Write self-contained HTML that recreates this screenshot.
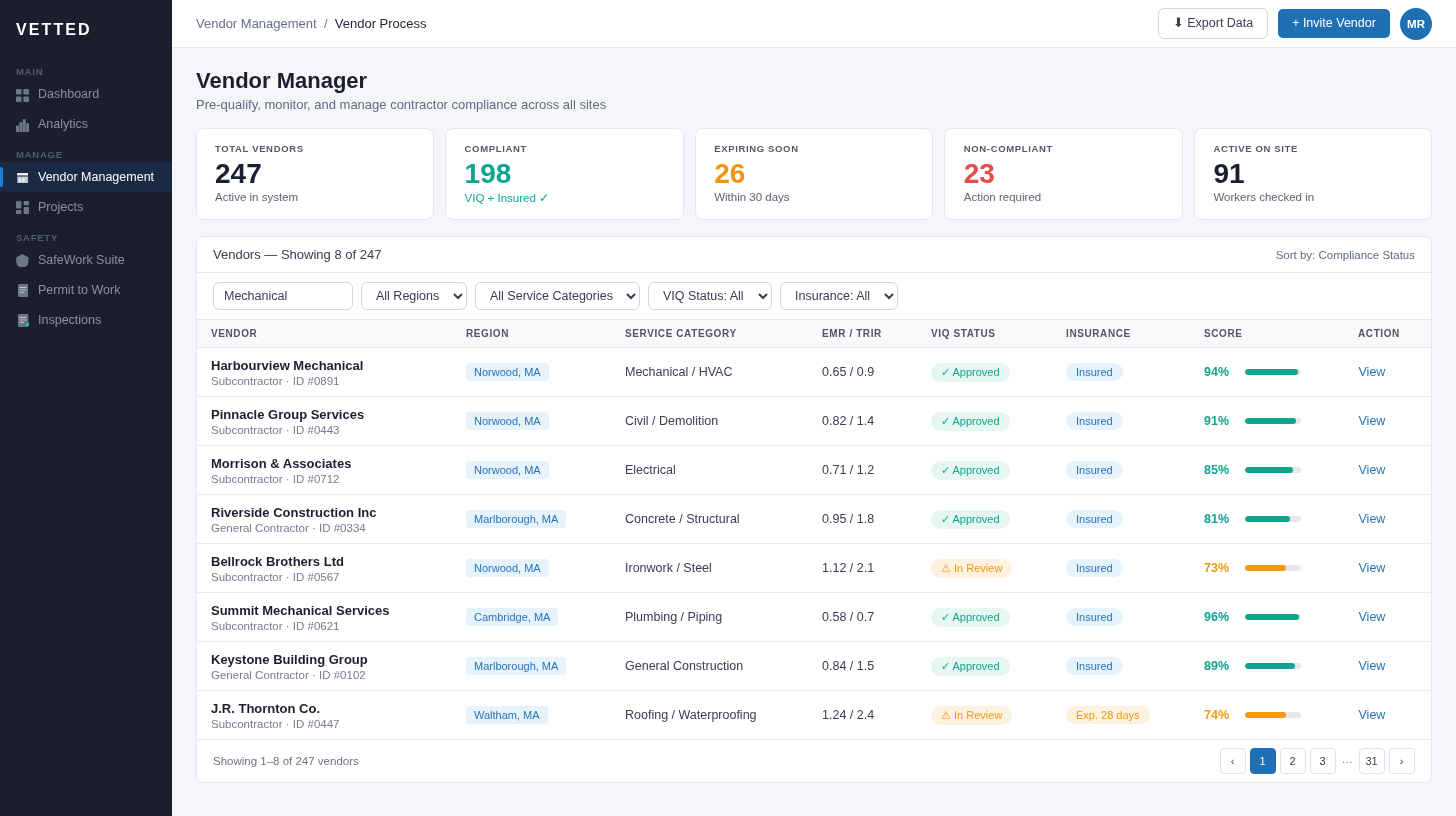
<!DOCTYPE html>
<html><head><meta charset="utf-8">
<style>
*{box-sizing:border-box;margin:0;padding:0}
html,body{width:1456px;height:816px;overflow:hidden}
body>div,body>h1{will-change:transform}
body{font-family:"Liberation Sans",sans-serif;background:#f4f6fa;color:#1e2433;position:relative}
.sb{position:absolute;left:0;top:0;width:172px;height:816px;background:#1b1e2d}
.logo{position:absolute;left:16px;top:21px;font-size:16px;font-weight:bold;color:#fff;letter-spacing:2.1px}
.sec{position:absolute;left:16px;font-size:9.5px;font-weight:bold;color:#535d70;letter-spacing:0.75px;margin-top:-1px}
.it{position:absolute;left:0;width:172px;height:30px;font-size:12.5px;color:#8a91a0}
.it .ic{position:absolute;left:16px;top:10px;width:13px;height:13px}
.it .tx{position:absolute;left:38px;top:8.4px;white-space:nowrap}
.it.act{background:#1b2a44;color:#fff}
.it.act:before{content:"";position:absolute;left:0;top:5px;width:3px;height:20px;background:#1f7fd6;border-radius:0 2px 2px 0}
.top{position:absolute;left:172px;top:0;width:1284px;height:48px;background:#fff;border-bottom:1px solid #e3e7ee}
.bc{position:absolute;left:24px;top:16px;font-size:13px;color:#667085;white-space:nowrap}
.bc b{font-weight:normal;color:#1e2433}
.btn1{position:absolute;left:986px;top:8px;width:110px;height:31px;border:1px solid #cfd6e4;border-radius:6px;background:#fff;font-size:12.5px;color:#374151;text-align:center;line-height:29px}
.btn2{position:absolute;left:1106px;top:9px;width:112px;height:29px;border-radius:5px;background:#1f6fb5;font-size:12.5px;color:#fff;text-align:center;line-height:28px}
.av{position:absolute;left:1228px;top:8px;width:32px;height:32px;border-radius:50%;background:#1f6fb5;color:#fff;font-size:11.5px;font-weight:bold;text-align:center;line-height:33px}
h1{position:absolute;left:196px;top:68px;font-size:22px;font-weight:bold;color:#1b2030;white-space:nowrap}
.sub{position:absolute;left:196px;top:97px;font-size:13px;color:#5f6b7d;white-space:nowrap}
.card{position:absolute;top:128px;height:92px;background:#fff;border:1px solid #e3e7ee;border-radius:8px}
.card .l{position:absolute;left:var(--p);top:14px;font-size:9.5px;font-weight:bold;letter-spacing:0.65px;color:#4f596c;white-space:nowrap}
.card .n{position:absolute;left:var(--p);top:29px;font-size:28px;font-weight:bold;color:#1b2030}
.card .s{position:absolute;left:var(--p);top:62px;font-size:11.5px;color:#5b6474;white-space:nowrap}
.tbl{position:absolute;left:196px;top:236px;width:1236px;height:547px;background:#fff;border:1px solid #e3e7ee;border-radius:8px;overflow:hidden}
.th1{position:absolute;left:0;top:0;width:100%;height:36px;border-bottom:1px solid #e3e7ee}
.th1 .t{position:absolute;left:16px;top:10px;font-size:13px;color:#343d4e}
.th1 .r{position:absolute;right:16px;top:12px;font-size:11.5px;color:#5f6b7d}
.flt{position:absolute;left:0;top:36px;width:100%;height:47px;border-bottom:1px solid #e3e7ee}
.inp{position:absolute;top:9px;height:28px;border:1px solid #cfd6e4;border-radius:4px;background:#fff;font-size:13px;color:#1e2433;padding-left:10px;line-height:26px;white-space:nowrap}
.fi,.fs{position:absolute;top:9px;height:28px;border:1px solid #cfd6e4;border-radius:6px;background:#fff;font-family:"Liberation Sans",sans-serif;font-size:12.5px;color:#374151;padding:0 10px;outline:none}
.fs{padding:0 10px 0 10px}
.sel svg{position:absolute;right:6px;top:10px}
.hd{position:absolute;left:0;top:83px;width:100%;height:28px;background:#f8f9fb;border-bottom:1px solid #e3e7ee}
.hd span{position:absolute;top:8px;font-size:10px;font-weight:bold;letter-spacing:0.6px;color:#4d5668;white-space:nowrap}
.row{position:absolute;left:0;width:100%;height:49px;border-bottom:1px solid #e8ebf0}
.row .nm{position:absolute;left:14px;top:10px;font-size:13px;font-weight:bold;color:#1b2030;white-space:nowrap}
.row .id{position:absolute;left:14px;top:27px;font-size:11.5px;color:#747d8d;white-space:nowrap}
.pill{position:absolute;top:15px;height:18px;border-radius:4px;background:#e6f2fc;color:#2874bb;font-size:11px;line-height:18px;padding:0 8px;white-space:nowrap}
.row .c{position:absolute;top:17px;font-size:12.5px;color:#364052;white-space:nowrap}
.bd{position:absolute;top:15px;height:19px;border-radius:10px;font-size:11px;line-height:19px;padding:0 10px;white-space:nowrap}
.ok{background:#e6f6f1;color:#10a48f}
.rv{background:#fff1e0;color:#f39a12}
.ins{background:#e6f2fc;color:#2874bb}
.h18{height:18px;line-height:18px}
.sc{position:absolute;left:1007px;top:17px;font-size:12.5px;font-weight:bold;white-space:nowrap}
.bar{position:absolute;left:1048px;top:21px;width:56px;height:6px;border-radius:3px;background:#e4e8ee;overflow:hidden}
.bar i{position:absolute;left:0;top:0;height:6px;border-radius:3px}
.vw{position:absolute;left:1161.5px;top:17px;font-size:12.5px;color:#2874bb}
.ft{position:absolute;left:0;top:503px;width:100%;height:44px}
.ft .t{position:absolute;left:16px;top:15px;font-size:11.5px;color:#6b7382}
.pg{position:absolute;top:8px;width:26px;height:26px;border:1px solid #dde2ea;border-radius:4px;background:#fff;font-size:11px;color:#374151;text-align:center;line-height:24px;padding-right:1px}
.pgd{position:absolute;top:13px;font-size:11.5px;color:#6f7888}
.pg.a{background:#1f6fb5;border-color:#1f6fb5;color:#fff}
</style></head><body>
<div class="sb">
  <div class="logo">VETTED</div>
  <div class="sec" style="top:67px">MAIN</div>
  <div class="it" style="top:79px"><svg class="ic" style="top:10px" viewBox="0 0 13 13"><rect x="0" y="0" width="5.5" height="5.5" rx="0.8" fill="#6f7687"/><rect x="7.3" y="0" width="5.7" height="5.5" rx="0.8" fill="#6f7687"/><rect x="0" y="7.4" width="5.5" height="5.6" rx="0.8" fill="#6f7687"/><rect x="7.3" y="7.4" width="5.7" height="5.6" rx="0.8" fill="#6f7687"/></svg><span class="tx">Dashboard</span></div>
  <div class="it" style="top:109px"><svg class="ic" style="top:10px" viewBox="0 0 13 13"><rect x="0" y="6.6" width="3.1" height="6.4" fill="#6f7687"/><rect x="3.4" y="3.2" width="3" height="9.8" fill="#6f7687"/><rect x="6.7" y="0.2" width="3.1" height="12.8" fill="#6f7687"/><rect x="10.1" y="4.2" width="2.9" height="8.8" fill="#6f7687"/></svg><span class="tx">Analytics</span></div>
  <div class="sec" style="top:150px">MANAGE</div>
  <div class="it act" style="top:162px"><svg class="ic" style="left:16.5px;top:10.5px;width:11.3px;height:10.4px" viewBox="0 0 12 11"><path d="M1 0 H11 Q12 0 12 1 V2.6 H0 V1 Q0 0 1 0 Z" fill="#f2f3f5"/><rect x="0" y="2.6" width="12" height="1.4" fill="#6f7888"/><rect x="0.3" y="4" width="11.4" height="7" fill="#c4c8d0"/><rect x="2.2" y="5.6" width="1.8" height="3.8" fill="#f4f5f7"/><rect x="6" y="5.6" width="1.9" height="3.8" fill="#f4f5f7"/></svg><span class="tx">Vendor Management</span></div>
  <div class="it" style="top:192px"><svg class="ic" style="top:9px" viewBox="0 0 13 13"><rect x="0" y="0" width="5.4" height="7.4" rx="1" fill="#6f7687"/><rect x="7.6" y="0" width="5.4" height="4.3" rx="1" fill="#6f7687"/><rect x="0" y="9" width="5.4" height="4" rx="1" fill="#6f7687"/><rect x="7.6" y="6.1" width="5.4" height="6.9" rx="1" fill="#6f7687"/></svg><span class="tx">Projects</span></div>
  <div class="sec" style="top:233px">SAFETY</div>
  <div class="it" style="top:245px"><svg class="ic" style="top:9px" viewBox="0 0 13 13.4"><path d="M6.35 0 L12.7 3.6 V8 Q12.7 11.4 9.6 13.3 H3.1 Q0 11.4 0 8 V3.6 Z" fill="#6f7687"/></svg><span class="tx">SafeWork Suite</span></div>
  <div class="it" style="top:275px"><svg class="ic" style="left:17.5px;top:9px;width:10.4px;height:13px" viewBox="0 0 10 13" preserveAspectRatio="none"><rect x="0" y="0" width="10" height="13" rx="1.4" fill="#6f7687"/><rect x="1.6" y="3" width="6.5" height="0.9" fill="#d3d6dc"/><rect x="1.6" y="5.3" width="6.5" height="1.2" fill="#a9aeb8"/><rect x="1.6" y="7.8" width="4.5" height="0.9" fill="#d3d6dc"/></svg><span class="tx">Permit to Work</span></div>
  <div class="it" style="top:305px"><svg class="ic" style="left:17.5px;top:9px;width:13px;height:13px" viewBox="0 0 13 13"><rect x="0" y="0" width="10.4" height="13" rx="1.4" fill="#6f7687"/><rect x="1.6" y="3" width="6.5" height="0.9" fill="#d3d6dc"/><rect x="1.6" y="5.3" width="6.5" height="1.2" fill="#a9aeb8"/><rect x="1.6" y="7.8" width="4.5" height="0.9" fill="#d3d6dc"/><circle cx="9.1" cy="10.5" r="2.4" fill="#12977f"/><path d="M8 10.6 L8.9 11.4 L10.5 9.6" stroke="#cfeee6" stroke-width="0.8" fill="none"/></svg><span class="tx">Inspections</span></div>
</div>

<div class="top">
  <div class="bc">Vendor Management &nbsp;/&nbsp; <b>Vendor Process</b></div>
  <div class="btn1">⬇ Export Data</div>
  <div class="btn2">+ Invite Vendor</div>
  <div class="av">MR</div>
</div>

<h1>Vendor Manager</h1>
<div class="sub">Pre-qualify, monitor, and manage contractor compliance across all sites</div>

<div class="card" style="left:196px;width:238px;--p:18px"><div class="l">TOTAL VENDORS</div><div class="n">247</div><div class="s">Active in system</div></div>
<div class="card" style="left:445px;width:239px;--p:18.6px"><div class="l">COMPLIANT</div><div class="n" style="color:#10a48f">198</div><div class="s" style="color:#10a48f">VIQ + Insured ✓</div></div>
<div class="card" style="left:695px;width:238px;--p:18.2px"><div class="l">EXPIRING SOON</div><div class="n" style="color:#f3930f">26</div><div class="s">Within 30 days</div></div>
<div class="card" style="left:944px;width:239px;--p:18.8px"><div class="l">NON-COMPLIANT</div><div class="n" style="color:#e24c4b">23</div><div class="s">Action required</div></div>
<div class="card" style="left:1194px;width:238px;--p:18.4px"><div class="l">ACTIVE ON SITE</div><div class="n">91</div><div class="s">Workers checked in</div></div>

<div class="tbl">
  <div class="th1"><div class="t">Vendors — Showing 8 of 247</div><div class="r">Sort by: Compliance Status</div></div>
  <div class="flt">
    <input class="fi" style="left:16px;width:140px" value="Mechanical">
    <select class="fs" style="left:164px"><option>All Regions</option></select>
    <select class="fs" style="left:278px"><option>All Service Categories</option></select>
    <select class="fs" style="left:451px"><option>VIQ Status: All</option></select>
    <select class="fs" style="left:583px"><option>Insurance: All</option></select>
  </div>
  <div class="hd">
    <span style="left:14px">VENDOR</span>
    <span style="left:269px">REGION</span>
    <span style="left:428px">SERVICE CATEGORY</span>
    <span style="left:625px">EMR / TRIR</span>
    <span style="left:734px">VIQ STATUS</span>
    <span style="left:869px">INSURANCE</span>
    <span style="left:1007px">SCORE</span>
    <span style="left:1161px">ACTION</span>
  </div>
  <!--ROWS-->
  <div class="row" style="top:111px"><div class="nm">Harbourview Mechanical</div><div class="id">Subcontractor · ID #0891</div><div class="pill" style="left:269px">Norwood, MA</div><div class="c" style="left:428px">Mechanical / HVAC</div><div class="c" style="left:625px">0.65 / 0.9</div><div class="bd ok" style="left:734px">✓ Approved</div><div class="bd ins h18" style="left:869px">Insured</div><div class="sc" style="color:#10a48f">94%</div><div class="bar"><i style="width:94%;background:#10a48f"></i></div><div class="vw">View</div></div>
  <div class="row" style="top:160px"><div class="nm">Pinnacle Group Services</div><div class="id">Subcontractor · ID #0443</div><div class="pill" style="left:269px">Norwood, MA</div><div class="c" style="left:428px">Civil / Demolition</div><div class="c" style="left:625px">0.82 / 1.4</div><div class="bd ok" style="left:734px">✓ Approved</div><div class="bd ins h18" style="left:869px">Insured</div><div class="sc" style="color:#10a48f">91%</div><div class="bar"><i style="width:91%;background:#10a48f"></i></div><div class="vw">View</div></div>
  <div class="row" style="top:209px"><div class="nm">Morrison &amp; Associates</div><div class="id">Subcontractor · ID #0712</div><div class="pill" style="left:269px">Norwood, MA</div><div class="c" style="left:428px">Electrical</div><div class="c" style="left:625px">0.71 / 1.2</div><div class="bd ok" style="left:734px">✓ Approved</div><div class="bd ins h18" style="left:869px">Insured</div><div class="sc" style="color:#10a48f">85%</div><div class="bar"><i style="width:85%;background:#10a48f"></i></div><div class="vw">View</div></div>
  <div class="row" style="top:258px"><div class="nm">Riverside Construction Inc</div><div class="id">General Contractor · ID #0334</div><div class="pill" style="left:269px">Marlborough, MA</div><div class="c" style="left:428px">Concrete / Structural</div><div class="c" style="left:625px">0.95 / 1.8</div><div class="bd ok" style="left:734px">✓ Approved</div><div class="bd ins h18" style="left:869px">Insured</div><div class="sc" style="color:#10a48f">81%</div><div class="bar"><i style="width:81%;background:#10a48f"></i></div><div class="vw">View</div></div>
  <div class="row" style="top:307px"><div class="nm">Bellrock Brothers Ltd</div><div class="id">Subcontractor · ID #0567</div><div class="pill" style="left:269px">Norwood, MA</div><div class="c" style="left:428px">Ironwork / Steel</div><div class="c" style="left:625px">1.12 / 2.1</div><div class="bd rv" style="left:734px">⚠ In Review</div><div class="bd ins h18" style="left:869px">Insured</div><div class="sc" style="color:#f39a12">73%</div><div class="bar"><i style="width:73%;background:#f39a12"></i></div><div class="vw">View</div></div>
  <div class="row" style="top:356px"><div class="nm">Summit Mechanical Services</div><div class="id">Subcontractor · ID #0621</div><div class="pill" style="left:269px">Cambridge, MA</div><div class="c" style="left:428px">Plumbing / Piping</div><div class="c" style="left:625px">0.58 / 0.7</div><div class="bd ok" style="left:734px">✓ Approved</div><div class="bd ins h18" style="left:869px">Insured</div><div class="sc" style="color:#10a48f">96%</div><div class="bar"><i style="width:96%;background:#10a48f"></i></div><div class="vw">View</div></div>
  <div class="row" style="top:405px"><div class="nm">Keystone Building Group</div><div class="id">General Contractor · ID #0102</div><div class="pill" style="left:269px">Marlborough, MA</div><div class="c" style="left:428px">General Construction</div><div class="c" style="left:625px">0.84 / 1.5</div><div class="bd ok" style="left:734px">✓ Approved</div><div class="bd ins h18" style="left:869px">Insured</div><div class="sc" style="color:#10a48f">89%</div><div class="bar"><i style="width:89%;background:#10a48f"></i></div><div class="vw">View</div></div>
  <div class="row" style="top:454px"><div class="nm">J.R. Thornton Co.</div><div class="id">Subcontractor · ID #0447</div><div class="pill" style="left:269px">Waltham, MA</div><div class="c" style="left:428px">Roofing / Waterproofing</div><div class="c" style="left:625px">1.24 / 2.4</div><div class="bd rv" style="left:734px">⚠ In Review</div><div class="bd rv h18" style="left:869px">Exp. 28 days</div><div class="sc" style="color:#f39a12">74%</div><div class="bar"><i style="width:74%;background:#f39a12"></i></div><div class="vw">View</div></div>
  <!--/ROWS-->
  <div class="ft"><div class="t">Showing 1–8 of 247 vendors</div>
    <div class="pg" style="left:1023px">‹</div><div class="pg a" style="left:1053px">1</div><div class="pg" style="left:1083px">2</div><div class="pg" style="left:1113px">3</div><div class="pgd" style="left:1144.5px">…</div><div class="pg" style="left:1162px">31</div><div class="pg" style="left:1192px">›</div>
  </div>
</div>
</body></html>
